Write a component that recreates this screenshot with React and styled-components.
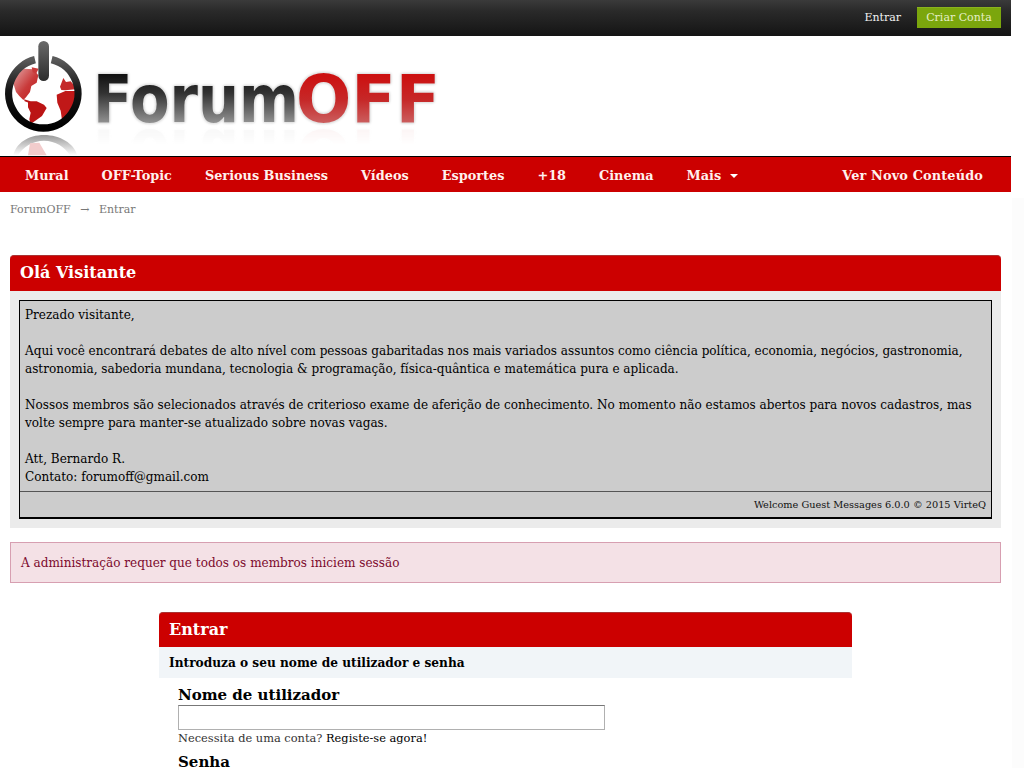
import React from "react";
import styled, { createGlobalStyle } from "styled-components";

const Global = createGlobalStyle`
  html, body { margin: 0; padding: 0; height: 768px; overflow: hidden; background: #fff; }
  body { font-family: "DejaVu Serif", serif; font-size: 12px; color: #000; }
`;

const Page = styled.div`
  width: 1011px;
  height: 768px;
  position: relative;
  overflow: hidden;
`;

const TopBar = styled.div`
  height: 36px;
  background: linear-gradient(#3a3a3a 0%, #2a2a2a 30%, #141414 100%);
  display: flex;
  align-items: center;
  justify-content: flex-end;
  padding: 0 10px 2px 0;
  box-sizing: border-box;
  gap: 16px;
`;

const TopLink = styled.a`
  color: #f2f2f2;
  font-size: 11px;
`;

const TopButton = styled.a`
  background: #7ba60d;
  border-top: 1px solid #8ab31c;
  color: #e6efc8;
  font-size: 11px;
  line-height: 20px;
  width: 84px;
  height: 21px;
  box-sizing: border-box;
  text-align: center;
`;

const Header = styled.div`
  height: 120px;
  display: flex;
  align-items: flex-start;
  overflow: hidden;
`;

const GlobeSvg = styled.svg`
  display: block;
  flex: none;
`;

const LogoText = styled.div`
  font-family: "DejaVu Sans", sans-serif;
  font-weight: 700;
  font-size: 66px;
  line-height: 66px;
  margin: 31px 0 0 -7px;
  white-space: nowrap;
  filter: drop-shadow(0 0 1px #fff) drop-shadow(0 0 1px #aaa);
  -webkit-box-reflect: below -14px linear-gradient(transparent 62%, rgba(0, 0, 0, 0.1));
`;

const LogoPart = styled.span`
  display: inline-block;
  background: ${(p) => p.$fill};
  -webkit-background-clip: text;
  background-clip: text;
  color: transparent;
  transform-origin: left top;
  transform: scaleX(${(p) => p.$scale});
  margin-right: ${(p) => p.$pull}px;
`;

const Nav = styled.nav`
  height: 36px;
  border-top: 1px solid #000;
  box-sizing: border-box;
  background: #cc0000;
  display: flex;
  align-items: center;
  padding: 1px 28px 0 25px;
  gap: 33px;
`;

const NavItem = styled.a`
  color: #fff1ee;
  font-weight: 700;
  font-size: 12.85px;
  letter-spacing: ${(p) => (p.$right ? "0.15px" : "0")};
  display: flex;
  align-items: center;
  gap: 9px;
  margin-left: ${(p) => (p.$right ? "auto" : "0")};
`;

const Caret = styled.i`
  width: 0;
  height: 0;
  border-left: 4px solid transparent;
  border-right: 4px solid transparent;
  border-top: 4px solid #fff;
  margin-top: 2px;
`;

const Crumbs = styled.div`
  margin: 11px 0 0 10px;
  height: 14px;
  line-height: 14px;
  font-size: 11px;
  color: #777;
  display: flex;
  gap: 9.5px;
`;

const Panel = styled.section`
  margin: 38px 10px 0;
`;

const PanelTitle = styled.h2`
  margin: 0;
  height: ${(p) => p.$h || 36}px;
  background: #cc0000;
  border-top: 1px solid #a33;
  border-radius: 4px 4px 0 0;
  box-sizing: border-box;
  padding: 0 10px;
  color: #fff;
  font-size: 16px;
  line-height: 33px;
  font-weight: 700;
`;

const PanelBody = styled.div`
  background: #ebebeb;
  padding: 9px;
`;

const Notice = styled.div`
  background: #cccccc;
  border: 1px solid #000;
  border-bottom-width: 2px;
`;

const NoticeText = styled.div`
  padding: 5px 5px 3px;
  line-height: 18px;
  font-size: 12.05px;
  height: 182px;
`;

const NoticeFooter = styled.div`
  border-top: 1px solid #555;
  height: 26px;
  box-sizing: border-box;
  padding-right: 5px;
  line-height: 25px;
  font-size: 9.75px;
  text-align: right;
  color: #111;
`;

const Alert = styled.div`
  margin: 14px 10px 0;
  height: 41px;
  box-sizing: border-box;
  background: #f4e1e6;
  border: 1px solid #d79fb1;
  color: #7c0a2d;
  font-size: 12.06px;
  line-height: 40px;
  padding-left: 10px;
`;

const Login = styled.section`
  width: 693px;
  margin: 29px 0 0 159px;
`;

const LoginSub = styled.div`
  background: #f1f5f8;
  height: 31px;
  line-height: 32px;
  padding-left: 10px;
  font-size: 12.16px;
  font-weight: 700;
`;

const Fields = styled.div`
  padding: 8px 0 0 19px;
`;

const Label = styled.label`
  display: block;
  font-size: 15px;
  font-weight: 700;
  line-height: 19px;
`;

const Input = styled.input`
  display: block;
  width: 427px;
  height: 25px;
  box-sizing: border-box;
  margin: 0;
  border: 1px solid #b0b0b0;
  border-top-color: #777;
  background: #fff;
`;

const Help = styled.div`
  font-size: 11.4px;
  line-height: 14px;
  margin: 1px 0 8px;
  color: #333;
`;

const StrongLink = styled.a`
  color: #000;
`;

const Side = styled.div`
  position: fixed;
  left: 1012px;
  top: 198px;
  width: 12px;
  height: 570px;
  background: #fcfcfc;
`;

function Globe() {
  return (
    <GlobeSvg width="100" height="120" viewBox="0 0 300 360">
      <defs>
        <linearGradient id="bar" x1="0" y1="0" x2="0" y2="1">
          <stop offset="0" stopColor="#6a6a6a" />
          <stop offset="1" stopColor="#2c2c2c" />
        </linearGradient>
        <linearGradient id="ring" x1="0" y1="0" x2="0" y2="1">
          <stop offset="0" stopColor="#5a5a5a" />
          <stop offset="0.45" stopColor="#151515" />
          <stop offset="1" stopColor="#000" />
        </linearGradient>
        <linearGradient id="refl" x1="0" y1="0" x2="0" y2="1">
          <stop offset="0" stopColor="#999" />
          <stop offset="1" stopColor="#fff" />
        </linearGradient>
        <linearGradient id="na" x1="0" y1="0" x2="1" y2="1">
          <stop offset="0" stopColor="#e3a8a8" />
          <stop offset="0.55" stopColor="#c93a3a" />
          <stop offset="1" stopColor="#bb1a1a" />
        </linearGradient>
      </defs>
      <path d="M50 110L72 98 100 100 115 118 110 140 94 150 90 168 78 184 70 192 58 180 48 168 40 142Z" fill="url(#na)" />
      <path d="M95 94L116 98 108 114 98 108Z" fill="#c93a3a" />
      <path d="M72 190L92 196 86 200 74 196Z" fill="#b81818" />
      <path d="M84 196L110 196 132 206 140 216 126 240 106 254 92 264 88 250 92 230 84 214Z" fill="#bb1414" />
      <path d="M170 176L196 165 226 165 229 190 224 214 212 236 196 260 186 252 182 224 172 200Z" fill="#c01818" />
      <path d="M180 152L190 126 198 138 212 136 226 152 226 160 196 163 184 162Z" fill="#c42a2a" />
      <path d="M105 71A104 104 0 1 0 155 71" fill="none" stroke="url(#ring)" strokeWidth="22" />
      <rect x="115" y="15" width="32" height="120" rx="16" fill="url(#bar)" />
      <path d="M40 358C48 322 84 297 132 297C180 297 222 322 232 358L210 358C196 334 166 314 132 314C98 314 68 334 54 358Z" fill="url(#refl)" />
      <path d="M90 322L118 320 140 358 84 358Z" fill="#f2cccc" />
    </GlobeSvg>
  );
}

const forumFill = "linear-gradient(#111 12%, #333 40%, #999 88%)";
const offFill = "linear-gradient(#c11 14%, #c62828 50%, #cc6666 90%)";

export default function App() {
  return (
    <Page>
      <Global />
      <TopBar>
        <TopLink>Entrar</TopLink>
        <TopButton>Criar Conta</TopButton>
      </TopBar>
      <Header>
        <Globe />
        <LogoText>
          <LogoPart $fill={forumFill} $scale={0.873} $pull={-33}>Forum</LogoPart>
          <LogoPart $fill={offFill} $scale={0.985} $pull={0}>OFF</LogoPart>
        </LogoText>
      </Header>
      <Nav>
        <NavItem>Mural</NavItem>
        <NavItem>OFF-Topic</NavItem>
        <NavItem>Serious Business</NavItem>
        <NavItem>Vídeos</NavItem>
        <NavItem>Esportes</NavItem>
        <NavItem>+18</NavItem>
        <NavItem>Cinema</NavItem>
        <NavItem>Mais <Caret /></NavItem>
        <NavItem $right>Ver Novo Conteúdo</NavItem>
      </Nav>
      <Crumbs>
        <span>ForumOFF</span>
        <span>→</span>
        <span>Entrar</span>
      </Crumbs>
      <Panel>
        <PanelTitle>Olá Visitante</PanelTitle>
        <PanelBody>
          <Notice>
            <NoticeText>
              Prezado visitante,<br /><br />
              Aqui você encontrará debates de alto nível com pessoas gabaritadas nos mais variados assuntos como ciência política, economia, negócios, gastronomia, astronomia, sabedoria mundana, tecnologia &amp; programação, física-quântica e matemática pura e aplicada.<br /><br />
              Nossos membros são selecionados através de criterioso exame de aferição de conhecimento. No momento não estamos abertos para novos cadastros, mas volte sempre para manter-se atualizado sobre novas vagas.<br /><br />
              Att, Bernardo R.<br />
              Contato: forumoff@gmail.com
            </NoticeText>
            <NoticeFooter>Welcome Guest Messages 6.0.0 © 2015 VirteQ</NoticeFooter>
          </Notice>
        </PanelBody>
      </Panel>
      <Alert>A administração requer que todos os membros iniciem sessão</Alert>
      <Login>
        <PanelTitle $h={35}>Entrar</PanelTitle>
        <LoginSub>Introduza o seu nome de utilizador e senha</LoginSub>
        <Fields>
          <Label>Nome de utilizador</Label>
          <Input />
          <Help>Necessita de uma conta? <StrongLink>Registe-se agora!</StrongLink></Help>
          <Label>Senha</Label>
        </Fields>
      </Login>
      <Side />
    </Page>
  );
}
